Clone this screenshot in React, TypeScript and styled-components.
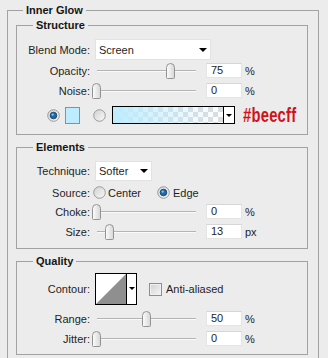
import React from 'react';
import styled, { createGlobalStyle } from 'styled-components';

const GlobalStyle = createGlobalStyle`
  html, body {
    margin: 0;
    padding: 0;
    background: #ececec;
  }
  body {
    font-family: "Liberation Sans", Arial, sans-serif;
    font-size: 11px;
    color: #1e1e1e;
    overflow: hidden;
  }
`;

const Panel = styled.fieldset`
  margin: 4px 9px 0 7px;
  padding: 0 10px 3px 8px;
  min-width: 0;
  border: 1px solid #a2a2a2;
`;

const Legend = styled.legend<{ $indent: number }>`
  margin-left: ${(p) => p.$indent}px;
  padding: 0 3px;
  font-weight: bold;
  line-height: 13px;
  color: #151515;
`;

const Group = styled.fieldset<{ $top: number; $pt: number; $pb: number }>`
  margin: ${(p) => p.$top}px 0 0 0;
  padding: ${(p) => p.$pt}px 0 ${(p) => p.$pb}px 0;
  min-width: 0;
  border: 1px solid #a2a2a2;
`;

const Row = styled.div<{ $mt?: number; $h: number }>`
  display: flex;
  align-items: center;
  height: ${(p) => p.$h}px;
  margin-top: ${(p) => p.$mt ?? 0}px;
`;

const Label = styled.span`
  flex: none;
  width: 73px;
  margin-right: 2px;
  text-align: right;
  white-space: nowrap;
`;

const Select = styled.div<{ $w: number }>`
  box-sizing: border-box;
  display: flex;
  align-items: center;
  justify-content: space-between;
  width: ${(p) => p.$w}px;
  height: 100%;
  margin-left: 3px;
  padding: 0 3px 0 3px;
  background: #fff;
  border: 1px solid #e2e2e2;
`;

const Arrow = styled.span`
  width: 0;
  height: 0;
  border-left: 4px solid transparent;
  border-right: 4px solid transparent;
  border-top: 4px solid #000;
`;

const SmallArrow = styled(Arrow)`
  border-left-width: 3px;
  border-right-width: 3px;
  border-top-width: 3px;
`;

const SliderTrack = styled.div`
  position: relative;
  flex: none;
  width: 108px;
  height: 16px;

  &::before {
    content: '';
    position: absolute;
    left: 5px;
    right: 4px;
    top: 7px;
    height: 1px;
    background: #b4b4b4;
    box-shadow: 0 1px 0 #fafafa;
  }
`;

const Thumb = styled.svg`
  position: absolute;
  top: 0;
`;

const NumberBox = styled.div`
  box-sizing: border-box;
  flex: none;
  width: 36px;
  height: 15px;
  margin-left: 6px;
  padding-left: 4px;
  line-height: 13px;
  background: #fff;
  border: 1px solid #e4e4e4;
  border-top-color: #d6d6d6;
`;

const Unit = styled.span`
  margin-left: 3px;
`;

const Swatch = styled.div`
  flex: none;
  box-sizing: border-box;
  width: 15px;
  height: 17px;
  margin-left: 5px;
  background: #beecff;
  border: 1px solid #8f8f8f;
`;

const GradientPicker = styled.div`
  flex: none;
  box-sizing: border-box;
  display: flex;
  width: 123px;
  height: 18px;
  margin-left: 6px;
  border: 1px solid #000;
`;

const GradientFill = styled.div`
  flex: 1;
  background-color: #fff;
  background-image: linear-gradient(to right, #beecff, rgba(190, 236, 255, 0)),
    linear-gradient(45deg, #dcdcdc 25%, transparent 25%, transparent 75%, #dcdcdc 75%),
    linear-gradient(45deg, #dcdcdc 25%, transparent 25%, transparent 75%, #dcdcdc 75%);
  background-size: 100% 100%, 10px 10px, 10px 10px;
  background-position: 0 0, 0 0, 5px 5px;
`;

const ArrowButton = styled.div`
  flex: none;
  display: flex;
  align-items: center;
  justify-content: center;
  width: 10px;
  background: #fff;
  border-left: 1px solid #000;
`;

const HexText = styled.span`
  display: inline-block;
  margin-left: 8px;
  font-size: 20px;
  font-weight: bold;
  color: #d2121b;
  letter-spacing: 0.3px;
  transform: scaleX(0.74);
  transform-origin: left center;
`;

const RadioWrap = styled.span<{ $ml: number }>`
  display: inline-flex;
  margin-left: ${(p) => p.$ml}px;
`;

const OptionText = styled.span<{ $ml: number }>`
  margin-left: ${(p) => p.$ml}px;
  white-space: nowrap;
`;

const Contour = styled.div`
  flex: none;
  box-sizing: border-box;
  display: flex;
  width: 42px;
  height: 100%;
  margin-left: 3px;
  background: #fff;
  border: 1px solid #000;
`;

const ContourCurve = styled.svg`
  flex: none;
`;

const ContourArrow = styled.div`
  flex: 1;
  display: flex;
  justify-content: center;
  padding-top: 13px;
  border-left: 1px solid #000;
`;

const Checkbox = styled.span`
  box-sizing: border-box;
  flex: none;
  width: 13px;
  height: 13px;
  margin-left: 12px;
  border: 1px solid #8e8e8e;
  background: linear-gradient(135deg, #d2d2d2, #f4f4f4);
  box-shadow: inset 0 0 0 1px #f0f0f0;
`;

const Radio: React.FC<{ checked?: boolean }> = ({ checked }) => (
  <svg width="13" height="13" viewBox="0 0 13 13">
    <defs>
      <linearGradient id={checked ? 'rOn' : 'rOff'} x1="0" y1="0" x2="1" y2="1">
        <stop offset="0" stopColor="#d0d0d0" />
        <stop offset="1" stopColor="#fafafa" />
      </linearGradient>
    </defs>
    <circle cx="6.5" cy="6.5" r="5.8" fill={`url(#${checked ? 'rOn' : 'rOff'})`} stroke="#9a9a9a" strokeWidth="1" />
    {checked && (
      <>
        <circle cx="6.5" cy="6.5" r="3.3" fill="#1d6aa8" stroke="#0d3a63" strokeWidth="0.8" />
        <circle cx="5.7" cy="5.6" r="1.2" fill="#7cc0ee" />
      </>
    )}
  </svg>
);

const Slider: React.FC<{ value: number }> = ({ value }) => (
  <SliderTrack>
    <Thumb width="9" height="16" viewBox="0 0 9 16" style={{ left: Math.round((value / 100) * 99) }}>
      <defs>
        <linearGradient id="thumbFill" x1="0" y1="0" x2="1" y2="0">
          <stop offset="0" stopColor="#fdfdfd" />
          <stop offset="1" stopColor="#d6d6d6" />
        </linearGradient>
      </defs>
      <path
        d="M0.5 4.5 Q0.5 0.5 4.5 0.5 Q8.5 0.5 8.5 4.5 V14.5 Q8.5 15.5 7.5 15.5 H1.5 Q0.5 15.5 0.5 14.5 Z"
        fill="url(#thumbFill)"
        stroke="#939393"
      />
    </Thumb>
  </SliderTrack>
);

const SliderRow: React.FC<{ label: string; value: number; unit?: string; mt: number }> = ({
  label,
  value,
  unit = '%',
  mt,
}) => (
  <Row $mt={mt} $h={15}>
    <Label>{label}</Label>
    <Slider value={value} />
    <NumberBox>{value}</NumberBox>
    <Unit>{unit}</Unit>
  </Row>
);

export default function App() {
  return (
    <>
      <GlobalStyle />
      <Panel>
        <Legend $indent={7}>Inner Glow</Legend>

        <Group $top={2} $pt={7} $pb={10}>
          <Legend $indent={16}>Structure</Legend>
          <Row $h={21}>
            <Label>Blend Mode:</Label>
            <Select $w={116}>
              <span>Screen</span>
              <Arrow />
            </Select>
          </Row>
          <SliderRow label="Opacity:" value={75} mt={3} />
          <SliderRow label="Noise:" value={0} mt={5} />
          <Row $mt={8} $h={18}>
            <RadioWrap $ml={30}>
              <Radio checked />
            </RadioWrap>
            <Swatch />
            <RadioWrap $ml={13}>
              <Radio />
            </RadioWrap>
            <GradientPicker>
              <GradientFill />
              <ArrowButton>
                <SmallArrow />
              </ArrowButton>
            </GradientPicker>
            <HexText>#beecff</HexText>
          </Row>
        </Group>

        <Group $top={6} $pt={7} $pb={9}>
          <Legend $indent={16}>Elements</Legend>
          <Row $h={20}>
            <Label>Technique:</Label>
            <Select $w={57}>
              <span>Softer</span>
              <Arrow />
            </Select>
          </Row>
          <Row $mt={5} $h={13}>
            <Label>Source:</Label>
            <RadioWrap $ml={1}>
              <Radio />
            </RadioWrap>
            <OptionText $ml={2}>Center</OptionText>
            <RadioWrap $ml={16}>
              <Radio checked />
            </RadioWrap>
            <OptionText $ml={3}>Edge</OptionText>
          </Row>
          <SliderRow label="Choke:" value={0} mt={5} />
          <SliderRow label="Size:" value={13} unit="px" mt={5} />
        </Group>

        <Group $top={6} $pt={5} $pb={8}>
          <Legend $indent={16}>Quality</Legend>
          <Row $h={32}>
            <Label>Contour:</Label>
            <Contour>
              <ContourCurve width="30" height="30" viewBox="0 0 30 30">
                <polygon points="0,30 30,0 30,30" fill="#8f8f8f" />
              </ContourCurve>
              <ContourArrow>
                <SmallArrow />
              </ContourArrow>
            </Contour>
            <Checkbox />
            <OptionText $ml={4}>Anti-aliased</OptionText>
          </Row>
          <SliderRow label="Range:" value={50} mt={6} />
          <SliderRow label="Jitter:" value={0} mt={5} />
        </Group>
      </Panel>
    </>
  );
}
